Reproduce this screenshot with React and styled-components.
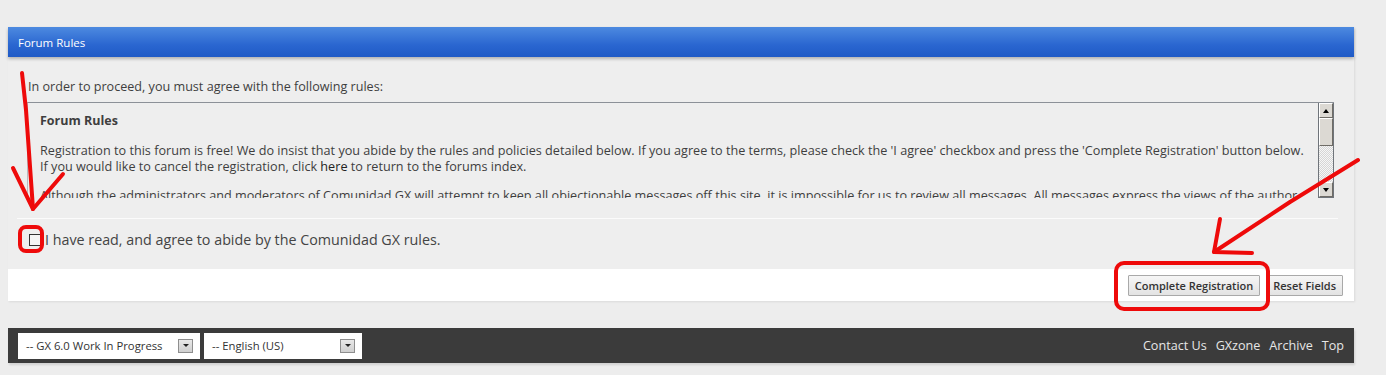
import React from "react";
import styled, { createGlobalStyle } from "styled-components";

const GlobalStyle = createGlobalStyle`
  html, body {
    margin: 0;
    padding: 0;
    background: #ededed;
    font-family: "Open Sans", "Noto Sans", sans-serif;
    color: #3e3e3e;
  }
`;

const Page = styled.div`
  position: relative;
  width: 1386px;
  height: 375px;
  overflow: hidden;
  padding-top: 27px;
  box-sizing: border-box;
`;

const Block = styled.div`
  margin-left: 8px;
  width: 1346px;
  box-shadow: 1px 1px 2px rgba(0, 0, 0, 0.08);
`;

const BlockHead = styled.div`
  height: 30px;
  display: flex;
  align-items: center;
  padding-left: 10px;
  font-size: 11.5px;
  color: #ffffff;
  background: linear-gradient(#4d8ae0, #2a66d0 60%, #1f5ac6);
  box-shadow: 0 2px 3px rgba(0, 0, 0, 0.25);
  position: relative;
`;

const BlockBody = styled.div`
  background: #eeeeee;
  height: 212px;
  box-sizing: border-box;
  padding: 22px 20px 0 9px;
`;

const Intro = styled.div`
  font-size: 12.6px;
  line-height: 16px;
  padding-left: 11px;
  color: #3e3e3e;
`;

const RulesBox = styled.div`
  margin: 7px 0 0 10px;
  height: 96px;
  display: flex;
  border-top: 1px solid #8c9198;
  border-left: 1px solid #b8bcc2;
  box-sizing: border-box;
`;

const RulesText = styled.div`
  flex: 1;
  overflow: hidden;
  padding: 9px 12px 0 12px;
  font-size: 12.65px;
  line-height: 16px;
  color: #3e3e3e;

  h3 {
    margin: 0 0 12px;
    font-size: 12.5px;
    font-weight: 700;
    line-height: 18px;
  }
  p {
    margin: 0 0 13px;
  }
  a {
    color: #222;
    text-decoration: none;
  }
`;

const Scrollbar = styled.div`
  width: 16px;
  display: flex;
  flex-direction: column;
  border: 1px solid #6f747a;
  border-top: none;
  box-sizing: border-box;
  background-color: #eaeaea;
  background-image: repeating-conic-gradient(#d6d6d6 0 25%, #f6f6f6 0 50%);
  background-size: 2px 2px;
`;

const ScrollButton = styled.div`
  height: 15px;
  flex: none;
  background: #dcd9d3;
  border: 1px solid;
  border-color: #ffffff #6f6c66 #6f6c66 #ffffff;
  box-sizing: border-box;
  display: flex;
  align-items: center;
  justify-content: center;

  &::after {
    content: "";
    border-left: 3.5px solid transparent;
    border-right: 3.5px solid transparent;
    ${(p) =>
      p.$down
        ? "border-top: 4px solid #000;"
        : "border-bottom: 4px solid #000;"}
  }
`;

const ScrollThumb = styled.div`
  height: 28px;
  flex: none;
  background: #dcd9d3;
  border: 1px solid;
  border-color: #ffffff #6f6c66 #6f6c66 #ffffff;
  box-sizing: border-box;
`;

const Spacer = styled.div`
  flex: 1;
`;

const Divider = styled.div`
  margin-top: 20px;
  height: 1px;
  background: #fbfbfb;
  margin-right: -4px;
`;

const AgreeRow = styled.label`
  display: flex;
  align-items: center;
  gap: 4px;
  margin-top: 12px;
  padding-left: 12px;
  font-size: 14.3px;
  line-height: 18px;
  color: #444;
`;

const Checkbox = styled.span`
  width: 12px;
  height: 12px;
  box-sizing: border-box;
  border: 1px solid #333;
  background: #f4f4f4;
  flex: none;
`;

const Actions = styled.div`
  height: 32px;
  background: #ffffff;
  display: flex;
  align-items: center;
  justify-content: flex-end;
  gap: 6px;
  padding-right: 11px;
`;

const Button = styled.button`
  height: 21px;
  padding: 0 ${(p) => p.$pad || 8}px;
  font-family: "Open Sans", "Noto Sans", sans-serif;
  font-size: 11px;
  font-weight: 600;
  color: #333;
  border: 1px solid #a9a9a9;
  border-radius: 1px;
  background: linear-gradient(#f6f6f6, #e3e3e3);
`;

const Footer = styled.div`
  margin: 27px 0 0 8px;
  width: 1346px;
  height: 35px;
  background: #3b3b3b;
  display: flex;
  align-items: center;
  padding: 0 10px;
  box-sizing: border-box;
  box-shadow: 1px 2px 2px rgba(0, 0, 0, 0.12);
`;

const Select = styled.div`
  width: ${(p) => p.$w}px;
  height: 26px;
  background: #ffffff;
  display: flex;
  align-items: center;
  padding: 0 7px 0 8px;
  box-sizing: border-box;
  font-size: 11.3px;
  color: #333;
  margin-right: 4px;

  span {
    flex: 1;
  }
`;

const SelectArrow = styled.div`
  width: 15px;
  height: 14px;
  box-sizing: border-box;
  background: linear-gradient(#e8e8e8, #cfcfcf);
  border: 1px solid #8e8e8e;
  display: flex;
  align-items: center;
  justify-content: center;

  &::after {
    content: "";
    border-left: 3px solid transparent;
    border-right: 3px solid transparent;
    border-top: 3px solid #222;
  }
`;

const FooterLinks = styled.nav`
  margin-left: auto;
  display: flex;
  gap: 9px;
  font-size: 12.6px;
  color: #e6e6e6;
`;

const Annotations = styled.svg`
  position: absolute;
  left: 0;
  top: 0;
  pointer-events: none;
`;

const red = {
  fill: "none",
  stroke: "#ee0a0a",
  strokeWidth: 4,
  strokeLinecap: "round",
  strokeLinejoin: "round",
};

export default function App() {
  return (
    <Page>
      <GlobalStyle />
      <Block>
        <BlockHead>Forum Rules</BlockHead>
        <BlockBody>
          <Intro>In order to proceed, you must agree with the following rules:</Intro>
          <RulesBox>
            <RulesText>
              <h3>Forum Rules</h3>
              <p>
                Registration to this forum is free! We do insist that you abide by the rules and
                policies detailed below. If you agree to the terms, please check the 'I agree'
                checkbox and press the 'Complete Registration' button below.
                <br />
                If you would like to cancel the registration, click <a href="#">here</a> to return
                to the forums index.
              </p>
              <p>
                Although the administrators and moderators of Comunidad GX will attempt to keep all
                objectionable messages off this site, it is impossible for us to review all
                messages. All messages express the views of the author, and neither the owners of
                Comunidad GX, nor Jelsoft Enterprises Ltd. will be held responsible for the content
                of any message.
              </p>
            </RulesText>
            <Scrollbar>
              <ScrollButton />
              <ScrollThumb />
              <Spacer />
              <ScrollButton $down />
            </Scrollbar>
          </RulesBox>
          <Divider />
          <AgreeRow>
            <Checkbox />
            I have read, and agree to abide by the Comunidad GX rules.
          </AgreeRow>
        </BlockBody>
        <Actions>
          <Button $pad={6}>Complete Registration</Button>
          <Button $pad={6}>Reset Fields</Button>
        </Actions>
      </Block>
      <Footer>
        <Select $w={182}>
          <span>-- GX 6.0 Work In Progress</span>
          <SelectArrow />
        </Select>
        <Select $w={158}>
          <span>-- English (US)</span>
          <SelectArrow />
        </Select>
        <FooterLinks>
          <span>Contact Us</span>
          <span>GXzone</span>
          <span>Archive</span>
          <span>Top</span>
        </FooterLinks>
      </Footer>
      <Annotations width="1386" height="375" viewBox="0 0 1386 375">
        <path {...red} d="M22 73 L26 110 L33 209" />
        <path {...red} d="M13 168 L33 209 L63 174" />
        <rect {...red} x="20" y="227" width="22" height="24" rx="6" />
        <path {...red} d="M1358 160 L1290 202 L1214 252" />
        <path {...red} d="M1220 219 L1214 252 L1252 253" />
        <rect {...red} x="1116" y="263" width="152" height="46" rx="8" />
      </Annotations>
    </Page>
  );
}
